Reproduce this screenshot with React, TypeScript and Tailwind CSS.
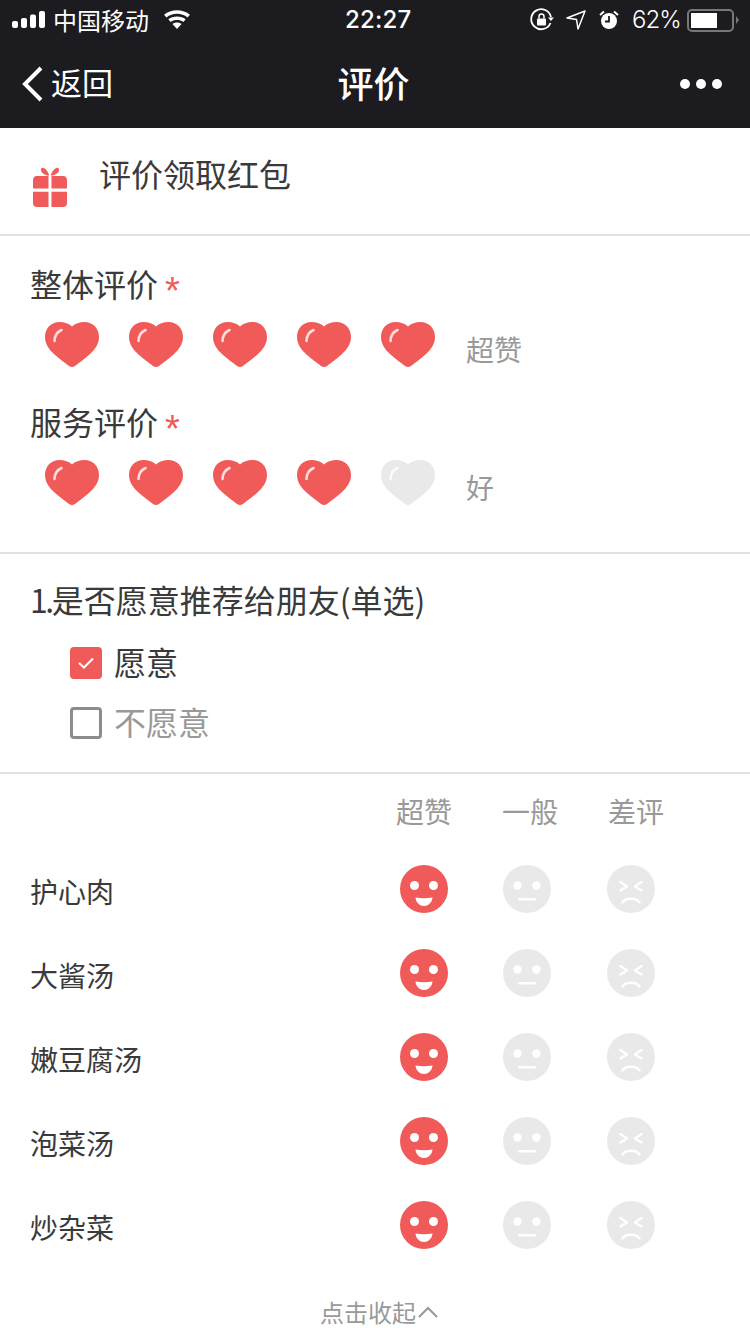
import React from "react";

const RED = "#f05a58";
const HEART = "M28 4.5 C31 1.5 35.5 0 40.5 0 C49 0 55 6.5 55 15 C55 22 51 27.5 45.5 32.5 C41 36.5 35.5 40.5 31 44 C29 45.3 27 45.3 25 44 C20.5 40.5 15 36.5 10.5 32.5 C5 27.5 1 22 1 15 C1 6.5 7 0 15.5 0 C20.5 0 25 1.5 28 4.5 Z";

function Heart({ on }: { on: boolean }) {
  return (
    <svg width="56" height="46" viewBox="0 0 56 46" className="block shrink-0">
      <path d={HEART} fill={on ? RED : "#e9e9e9"} />
      <path d="M10.5 19 C10.6 14 13 10 17.5 8" fill="none" stroke={on ? "#fbdcdb" : "#fafafa"} strokeWidth="2.6" strokeLinecap="round" />
    </svg>
  );
}

function HeartRow({ n, label }: { n: number; label: string }) {
  return (
    <div className="flex items-center h-[46px] pl-[44px]">
      <div className="flex gap-[28px]">
        {[0, 1, 2, 3, 4].map((i) => <Heart key={i} on={i < n} />)}
      </div>
      <span className="ml-[30px] mt-[8px] text-[28px] leading-[40px] text-[#999999]">{label}</span>
    </div>
  );
}

function Star() {
  return (
    <span
      className="inline-block ml-[7px] text-[38px] leading-[38px] text-[#f05a58] translate-y-[7px]"
      style={{ fontFamily: '"Liberation Sans", sans-serif' }}
    >
      *
    </span>
  );
}

function Face({ kind, on }: { kind: "good" | "mid" | "bad"; on?: boolean }) {
  const bg = on ? RED : "#e9e9e9";
  const fg = "#ffffff";
  return (
    <svg width="48" height="48" viewBox="0 0 48 48" className="block">
      <circle cx="24" cy="24" r="24" fill={bg} />
      {kind === "good" && (
        <>
          <circle cx="14.5" cy="20.5" r="4.5" fill={fg} />
          <circle cx="33.5" cy="20.5" r="4.5" fill={fg} />
          <path d="M15.5 32.5 C21 33.5 27 33.5 32.5 32.5 C32 38 28 41 24 41 C20 41 16 38 15.5 32.5 Z" fill={fg} />
        </>
      )}
      {kind === "mid" && (
        <>
          <circle cx="14.5" cy="20.5" r="4.2" fill={fg} />
          <circle cx="33.5" cy="20.5" r="4.2" fill={fg} />
          <rect x="15" y="33" width="18" height="2.6" rx="1.3" fill={fg} />
        </>
      )}
      {kind === "bad" && (
        <g fill="none" stroke={fg} strokeWidth="2.4" strokeLinecap="round" strokeLinejoin="round">
          <path d="M13.5 17 L20 21.5 L13.5 25.5" />
          <path d="M34.5 17 L28 21.5 L34.5 25.5" />
          <path d="M15.5 37.5 C18 32.5 30 32.5 32.5 37.5" />
        </g>
      )}
    </svg>
  );
}

function Row({ name }: { name: string }) {
  return (
    <div className="flex items-center h-[84px] pl-[30px]">
      <span className="w-[370px] mt-[4px] text-[28px] leading-[40px] text-[#3a3a3a]">{name}</span>
      <Face kind="good" on />
      <span className="ml-[55px]"><Face kind="mid" /></span>
      <span className="ml-[56px]"><Face kind="bad" /></span>
    </div>
  );
}

export default function App() {
  return (
    <div
      className="w-[750px] h-[1334px] overflow-hidden bg-white"
      style={{ fontFamily: '"Noto Sans CJK SC", "Noto Sans", sans-serif' }}
    >
      <header className="bg-[#1b1b20] h-[128px] text-white">
        <div className="flex items-center h-[40px] pl-[12px] pr-[11px]">
          <div className="flex items-center w-[333px]">
            <svg width="34" height="20" viewBox="0 0 34 20" fill="#fff" className="shrink-0">
              <rect x="0" y="11" width="6" height="7" rx="2" />
              <rect x="9" y="8" width="6" height="10" rx="2" />
              <rect x="18" y="4.5" width="6" height="13.5" rx="2" />
              <rect x="27" y="1" width="6" height="17" rx="2" />
            </svg>
            <span className="ml-[7px] text-[24px] leading-[40px]">中国移动</span>
            <svg width="30" height="22" viewBox="0 0 30 22" className="ml-[13px] -mt-[2px]" fill="#fff">
              <path d="M15 21 L10.5 16 C13 14 17 14 19.5 16 Z" />
              <path d="M8.7 14 L6.3 11.3 C11 7.5 19 7.5 23.7 11.3 L21.3 14 C18 11.4 12 11.4 8.7 14 Z" />
              <path d="M4.5 9.4 L2 6.7 C9 0.6 21 0.6 28 6.7 L25.5 9.4 C19.8 4.4 10.2 4.4 4.5 9.4 Z" />
            </svg>
          </div>
          <span className="text-[24px] leading-[40px] font-medium tracking-[0.2px]" style={{ fontFamily: "Inter, sans-serif" }}>22:27</span>
          <div className="flex items-center ml-auto">
            <svg width="24" height="24" viewBox="0 0 24 24" fill="none" className="shrink-0">
              <path d="M20.5 15 A10 10 0 1 1 21 9" stroke="#fff" strokeWidth="1.8" />
              <path d="M18 9.5 H24 L21 13 Z" fill="#fff" />
              <rect x="7" y="10.5" width="9" height="7" rx="1" fill="#fff" />
              <path d="M9 10.5 V8.5 A2.5 2.5 0 0 1 14 8.5 V10.5" stroke="#fff" strokeWidth="1.5" />
            </svg>
            <svg width="20" height="20" viewBox="0 0 20 20" fill="none" className="ml-[12px]">
              <path d="M1 8 L19 1 L12 19 L10.5 9.5 Z" stroke="#fff" strokeWidth="1.5" strokeLinejoin="round" />
            </svg>
            <svg width="20" height="20" viewBox="0 0 20 20" className="ml-[13px]">
              <circle cx="10" cy="11" r="8" fill="#fff" />
              <path d="M10 6 V11.5 H6" fill="none" stroke="#1b1b20" strokeWidth="1.8" />
              <path d="M1 5 L5 1.5 M19 5 L15 1.5" stroke="#fff" strokeWidth="2" />
            </svg>
            <span className="ml-[13px] w-[48px] text-[24px] leading-[40px] tracking-[-1px] font-light" style={{ fontFamily: "Inter, sans-serif" }}>62%</span>
            <div className="ml-[7px] flex items-center">
              <div className="w-[47px] h-[23px] rounded-[5px] border-2 border-[#77777b] p-[2px]">
                <div className="w-[26px] h-full bg-white" />
              </div>
              <div className="ml-[2px] w-0 h-0 border-y-[4px] border-y-transparent border-l-[3px] border-l-[#77777b]" />
            </div>
          </div>
        </div>
        <div className="relative flex items-center justify-between h-[88px] pl-[22px] pr-[28px]">
          <div className="flex items-center">
            <svg width="22" height="36" viewBox="0 0 22 36" fill="none" className="shrink-0">
              <path d="M19 2 L3 18 L19 34" stroke="#fff" strokeWidth="4" />
            </svg>
            <span className="ml-[7px] -mt-[4px] text-[31px] leading-[40px]">返回</span>
          </div>
          <span className="absolute left-0 right-[3px] -mt-[4px] text-center text-[36px] leading-[48px] font-medium">评价</span>
          <div className="flex gap-[6px]">
            <span className="w-[10px] h-[10px] rounded-full bg-white" />
            <span className="w-[10px] h-[10px] rounded-full bg-white" />
            <span className="w-[10px] h-[10px] rounded-full bg-white" />
          </div>
        </div>
      </header>

      <section className="flex h-[108px] border-b-2 border-[#e0e0e0] pl-[33px]">
        <svg width="34" height="40" viewBox="0 0 34 40" className="mt-[39px] shrink-0" fill={RED}>
          <path d="M16.2 8.5 C12.5 8.5 9 7 8 3.5 C7.5 1.2 9.5 0 11.2 1.2 C13.5 2.8 15.5 5 16.2 8.5 Z" />
          <path d="M17.8 8.5 C21.5 8.5 25 7 26 3.5 C26.5 1.2 24.5 0 22.8 1.2 C20.5 2.8 18.5 5 17.8 8.5 Z" />
          <path d="M0 13 C0 11 1.5 9 3.5 9 H15.5 V21.5 H0 Z" />
          <path d="M18.5 9 H30.5 C32.5 9 34 11 34 13 V21.5 H18.5 Z" />
          <path d="M0 24.7 H15.5 V40 H4 C1.5 40 0 38.5 0 36 Z" />
          <path d="M18.5 24.7 H34 V36 C34 38.5 32.5 40 30 40 H18.5 Z" />
        </svg>
        <span className="ml-[32px] mt-[22px] text-[32px] leading-[46px] text-[#3a3a3a]">评价领取红包</span>
      </section>

      <section className="h-[318px] border-b-2 border-[#e0e0e0] pt-[24px]">
        <div className="pl-[30px] h-[46px] text-[32px] leading-[46px] text-[#3a3a3a]">
          整体评价<Star />
        </div>
        <div className="mt-[16px]"><HeartRow n={5} label="超赞" /></div>
        <div className="mt-[30px] pl-[30px] h-[46px] text-[32px] leading-[46px] text-[#3a3a3a]">
          服务评价<Star />
        </div>
        <div className="mt-[16px]"><HeartRow n={4} label="好" /></div>
      </section>

      <section className="h-[220px] border-b-2 border-[#e0e0e0] pt-[22px]">
        <div className="pl-[30px] text-[32px] leading-[46px] text-[#3a3a3a]">
          <span className="tracking-[-2.5px]">1.</span>是否愿意推荐给朋友(单选)
        </div>
        <div className="mt-[16px] flex items-center h-[46px] pl-[70px]">
          <span className="flex items-center justify-center w-[32px] h-[32px] mt-[4px] rounded-[4px] bg-[#f05a58]">
            <svg width="18" height="14" viewBox="0 0 18 14" fill="none">
              <path d="M2 7 L7 11.5 L16 2.5" stroke="#fff" strokeWidth="2" />
            </svg>
          </span>
          <span className="ml-[12px] text-[32px] leading-[46px] text-[#3a3a3a]">愿意</span>
        </div>
        <div className="mt-[14px] flex items-center h-[46px] pl-[70px]">
          <span className="w-[32px] h-[32px] mt-[4px] rounded-[4px] border-[3px] border-[#8c8c8c]" />
          <span className="ml-[12px] text-[32px] leading-[46px] text-[#999999]">不愿意</span>
        </div>
      </section>

      <section>
        <div className="flex h-[73px] pl-[396px] pt-[17px] text-[28px] leading-[40px] text-[#999999]">
          <span>超赞</span>
          <span className="ml-[50px]">一般</span>
          <span className="ml-[50px]">差评</span>
        </div>
        <Row name="护心肉" />
        <Row name="大酱汤" />
        <Row name="嫩豆腐汤" />
        <Row name="泡菜汤" />
        <Row name="炒杂菜" />
      </section>

      <div className="flex items-center mt-[27px] pl-[320px] text-[24px] leading-[36px] text-[#999999]">
        点击收起
        <svg width="20" height="12" viewBox="0 0 20 12" fill="none" className="ml-[2px]">
          <path d="M1 11 L10 2 L19 11" stroke="#999999" strokeWidth="2" />
        </svg>
      </div>
    </div>
  );
}
